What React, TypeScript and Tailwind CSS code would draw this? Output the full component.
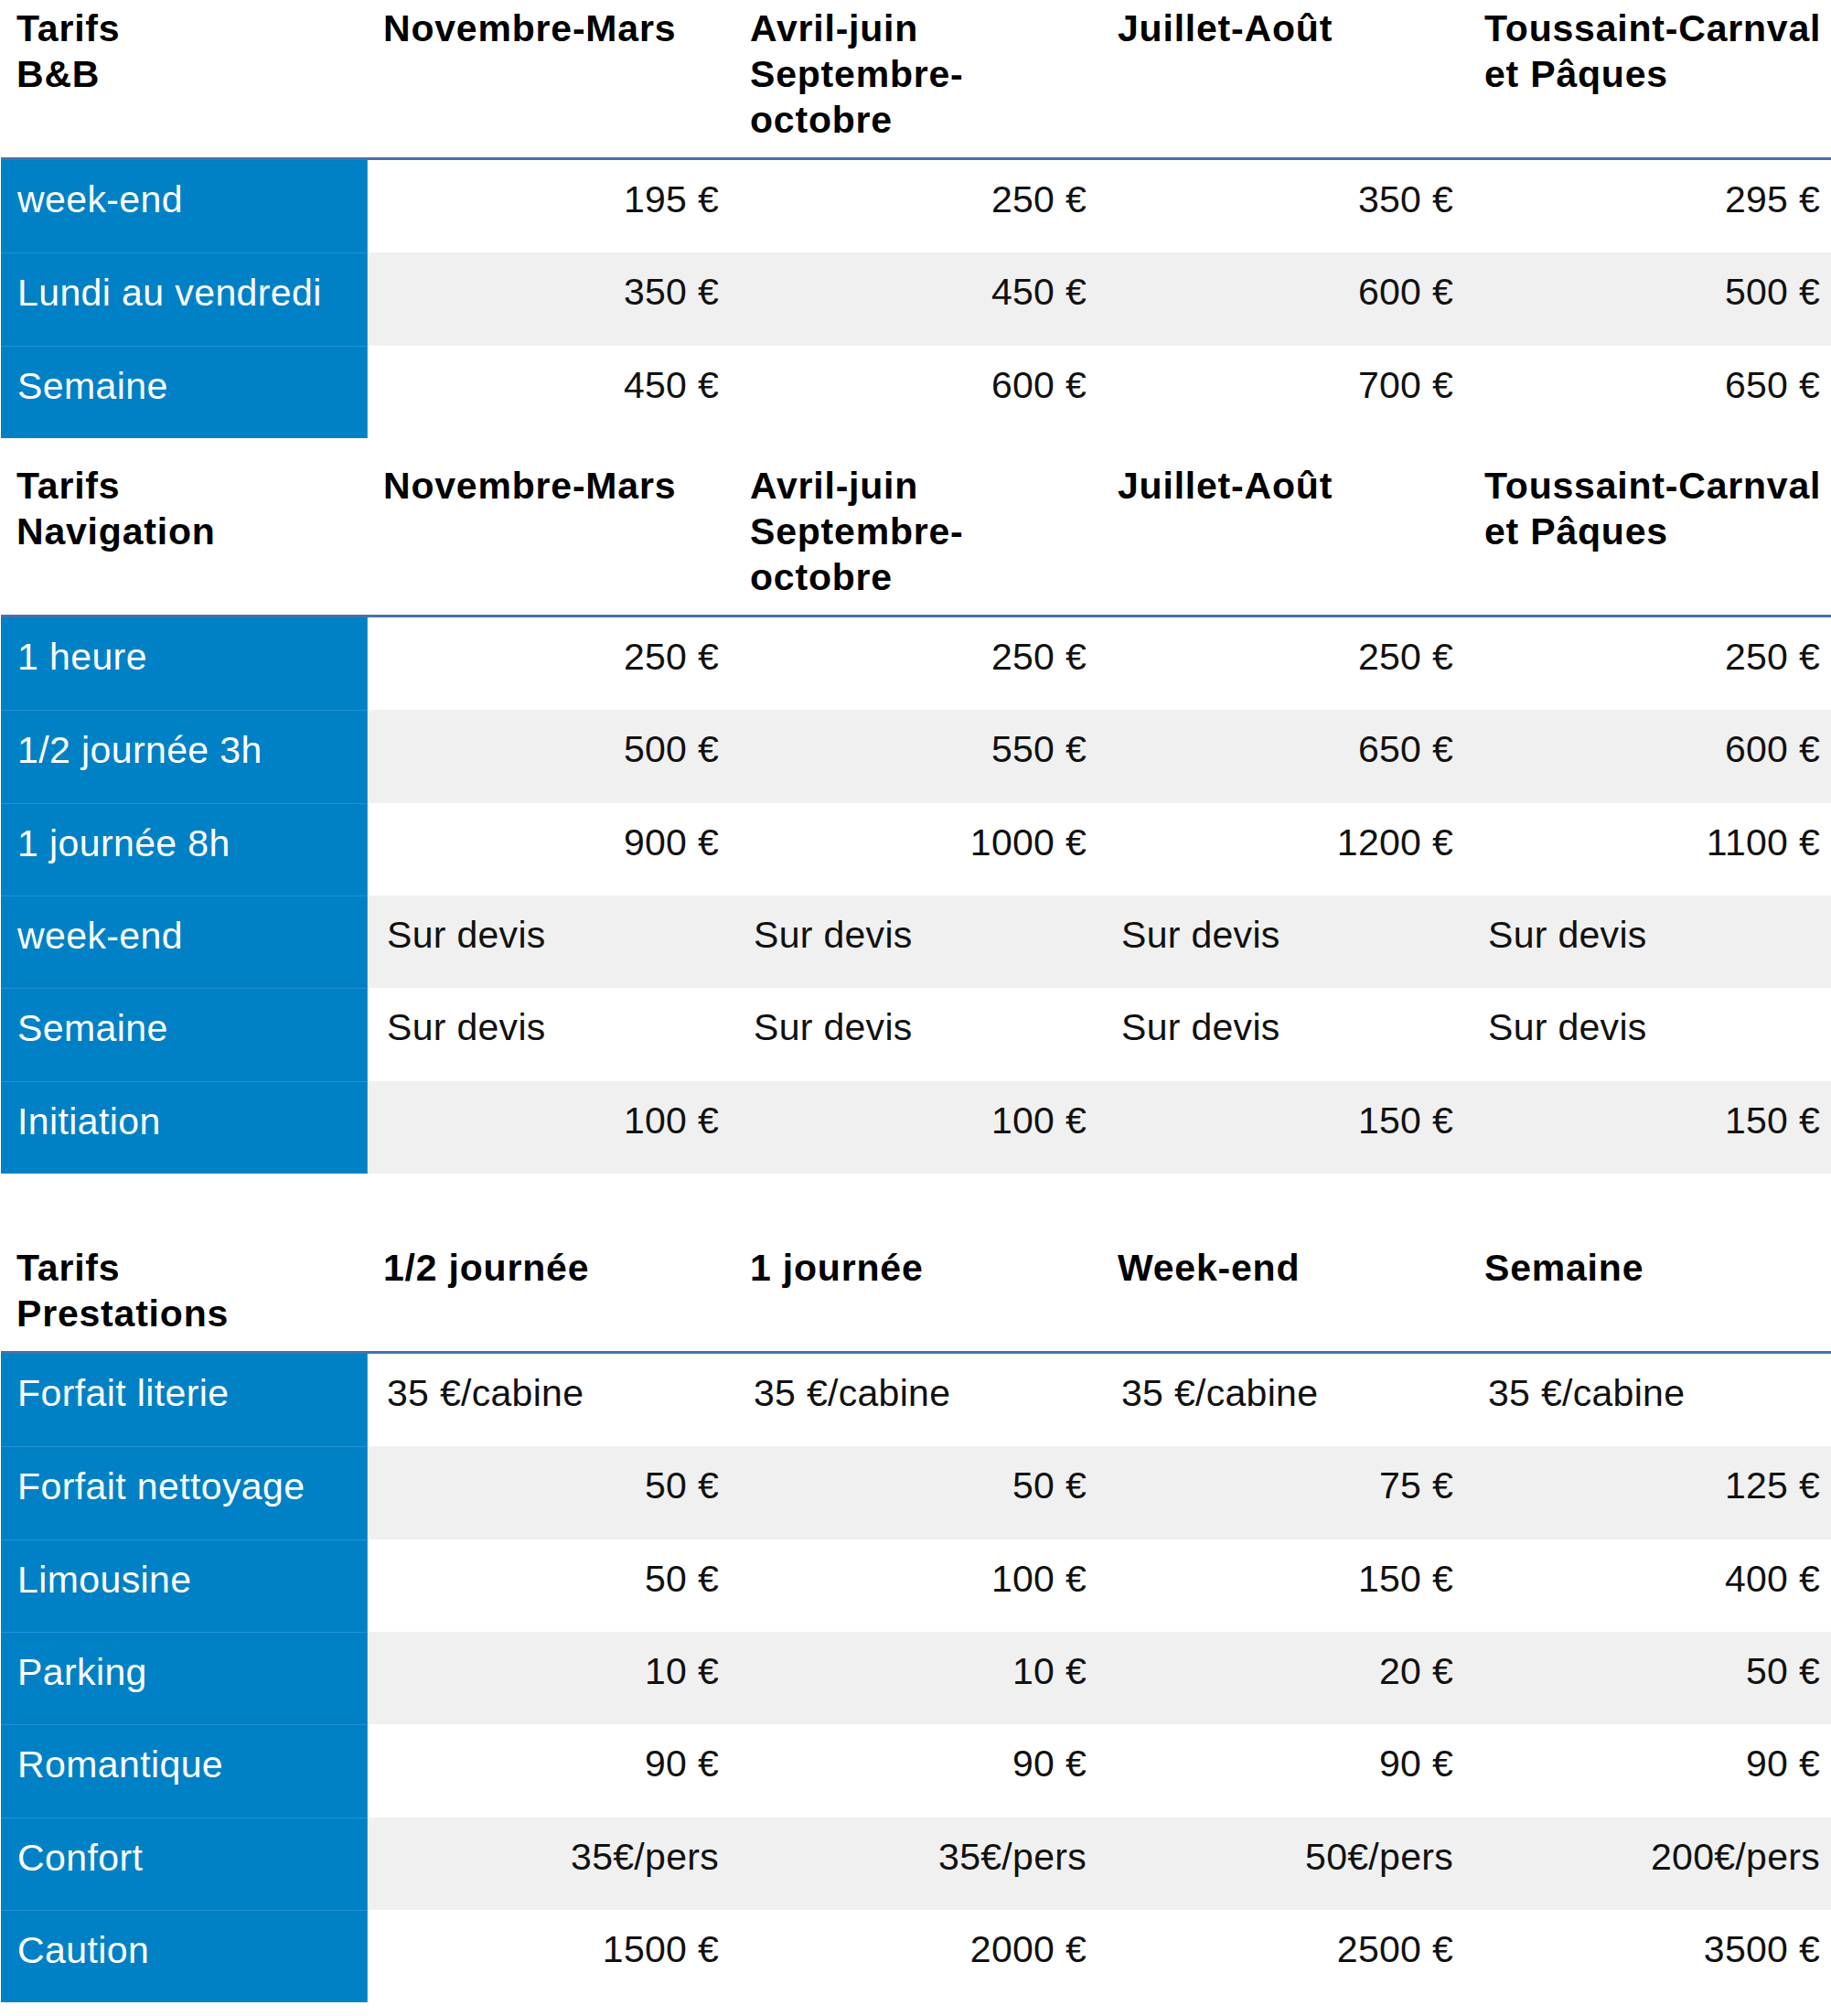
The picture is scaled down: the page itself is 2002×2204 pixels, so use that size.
import React from "react";

type Table = {
  header: React.ReactNode[];
  rows: { label: string; values: string[] }[];
  className?: string;
};

const seasons: React.ReactNode[] = [
  "Novembre-Mars",
  <>Avril-juin<br />Septembre-<br />octobre</>,
  "Juillet-Août",
  <>Toussaint-Carnval<br />et Pâques</>,
];

const tables: Table[] = [
  {
    header: [<>Tarifs<br />B&amp;B</>, ...seasons],
    rows: [
      { label: "week-end", values: ["195 €", "250 €", "350 €", "295 €"] },
      { label: "Lundi au vendredi", values: ["350 €", "450 €", "600 €", "500 €"] },
      { label: "Semaine", values: ["450 €", "600 €", "700 €", "650 €"] },
    ],
  },
  {
    header: [<>Tarifs<br />Navigation</>, ...seasons],
    rows: [
      { label: "1 heure", values: ["250 €", "250 €", "250 €", "250 €"] },
      { label: "1/2 journée 3h", values: ["500 €", "550 €", "650 €", "600 €"] },
      { label: "1 journée 8h", values: ["900 €", "1000 €", "1200 €", "1100 €"] },
      { label: "week-end", values: ["Sur devis", "Sur devis", "Sur devis", "Sur devis"] },
      { label: "Semaine", values: ["Sur devis", "Sur devis", "Sur devis", "Sur devis"] },
      { label: "Initiation", values: ["100 €", "100 €", "150 €", "150 €"] },
    ],
  },
  {
    header: [<>Tarifs<br />Prestations</>, "1/2 journée", "1 journée", "Week-end", "Semaine"],
    rows: [
      { label: "Forfait literie", values: ["35 €/cabine", "35 €/cabine", "35 €/cabine", "35 €/cabine"] },
      { label: "Forfait nettoyage", values: ["50 €", "50 €", "75 €", "125 €"] },
      { label: "Limousine", values: ["50 €", "100 €", "150 €", "400 €"] },
      { label: "Parking", values: ["10 €", "10 €", "20 €", "50 €"] },
      { label: "Romantique", values: ["90 €", "90 €", "90 €", "90 €"] },
      { label: "Confort", values: ["35€/pers", "35€/pers", "50€/pers", "200€/pers"] },
      { label: "Caution", values: ["1500 €", "2000 €", "2500 €", "3500 €"] },
    ],
  },
];

function isLeft(v: string) {
  return v.startsWith("Sur") || v.includes("cabine");
}

function PriceTable({ t }: { t: Table }) {
  return (
    <div className="grid grid-cols-[401px_401px_402px_401px_401px] ml-[1px]">
      {t.header.map((h, i) => (
        <div
          key={i}
          className="pt-[6px] pb-[16px] pl-[17px] pr-[4px] font-bold text-[41px] leading-[50px] tracking-[0.8px] text-black whitespace-nowrap border-b-[3px] border-[#4671a8]"
        >
          {h}
        </div>
      ))}
      {t.rows.map((r, ri) => {
        const stripe = ri % 2 === 1 ? "bg-[#f0f0f0]" : "bg-white";
        return (
          <React.Fragment key={ri}>
            <div
              className={`h-[101.33px] pt-[18px] pl-[18px] text-[41px] leading-[50px] tracking-[0.4px] text-white bg-[#0081c6] border-r border-[#2a98d6] ${
                ri > 0 ? "border-t border-t-[#1f93d3]" : ""
              }`}
            >
              {r.label}
            </div>
            {r.values.map((v, vi) => (
              <div
                key={vi}
                className={`h-[101.33px] pt-[18px] text-[41px] leading-[50px] tracking-[0.3px] text-[#111] ${stripe} ${
                  isLeft(v) ? "text-left pl-[21px]" : "text-right pr-[17px]"
                }`}
              >
                {v}
              </div>
            ))}
          </React.Fragment>
        );
      })}
    </div>
  );
}

export default function App() {
  return (
    <div
      className="w-full min-h-[2204px] overflow-hidden bg-white"
      style={{ fontFamily: '"Liberation Sans", Arial, Helvetica, sans-serif' }}
    >
      <PriceTable t={tables[0]} />
      <div className="h-[21px]" />
      <PriceTable t={tables[1]} />
      <div className="h-[72px]" />
      <PriceTable t={tables[2]} />
    </div>
  );
}
